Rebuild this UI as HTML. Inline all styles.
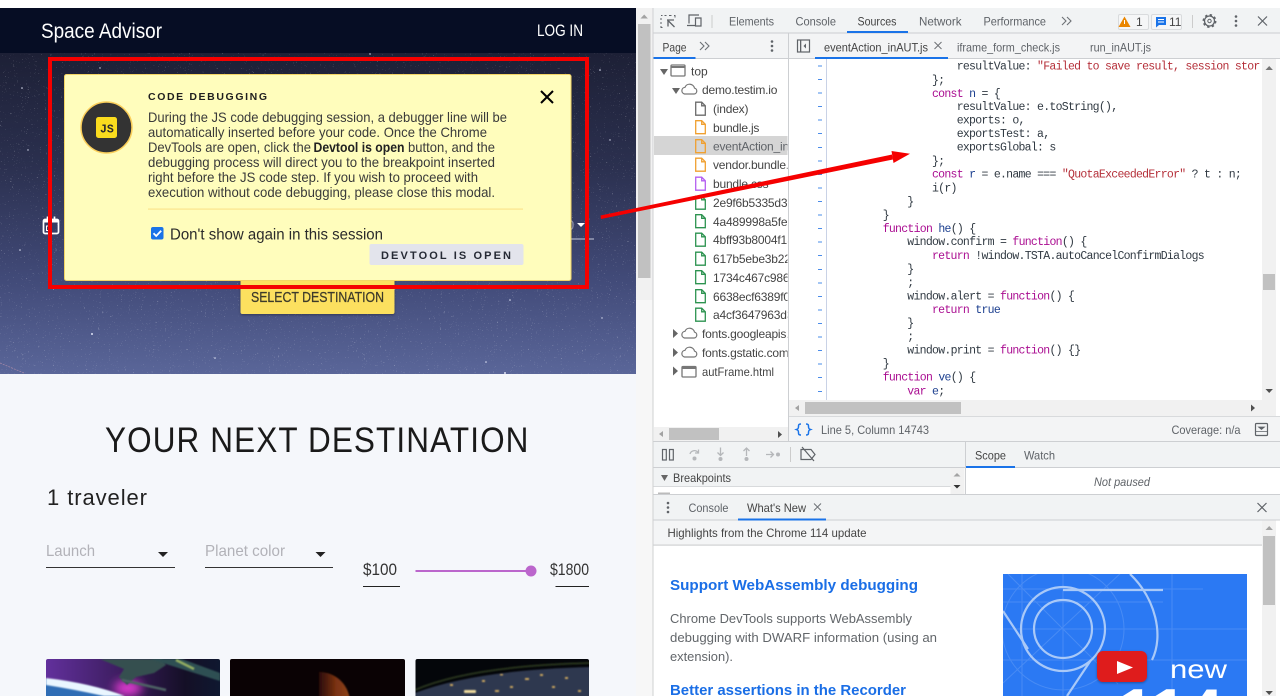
<!DOCTYPE html>
<html lang="en"><head><meta charset="utf-8"><title>Space Advisor</title>
<style>
html,body{margin:0;padding:0;width:1280px;height:696px;overflow:hidden;background:#fff}
#w{position:relative;width:1280px;height:696px;overflow:hidden}
svg{display:block;filter:blur(.3px)}
text{font-family:"Liberation Sans",sans-serif;white-space:pre}
.d{font-size:12px;fill:#5f6368}
.t{font-size:12px;fill:#444}
.n{letter-spacing:-.2px}
.m{font-size:14px;fill:#3a3a3a}
.c{font-family:"Liberation Mono",monospace;font-size:11.500px;letter-spacing:-.72px;fill:#303942}
.k{fill:#aa0d91}.s{fill:#b5303a}.v{fill:#1c3f8f}
</style></head><body><div id="w">
<svg width="1280" height="696" viewBox="0 0 1280 696" xmlns="http://www.w3.org/2000/svg">
<defs>
<linearGradient id="hero" x1="0" y1="0" x2="0" y2="1"><stop offset="0" stop-color="#1d2036"/><stop offset=".35" stop-color="#2b304f"/><stop offset=".7" stop-color="#414a78"/><stop offset="1" stop-color="#5a6699"/></linearGradient>
<linearGradient id="mars" x1="0" y1="0" x2="1" y2="0"><stop offset="0" stop-color="#2a0a06"/><stop offset=".55" stop-color="#7a3212"/><stop offset="1" stop-color="#8e4418"/></linearGradient>
<linearGradient id="pur" x1="0" y1="0" x2="1" y2="0"><stop offset="0" stop-color="#62309c"/><stop offset=".45" stop-color="#3a1c5c"/><stop offset=".8" stop-color="#140f26"/><stop offset="1" stop-color="#0f1830"/></linearGradient>
<filter id="stars" x="0" y="0" width="100%" height="100%"><feTurbulence type="fractalNoise" baseFrequency=".75" numOctaves="2" seed="7"/><feColorMatrix values="0 0 0 0 1  0 0 0 0 1  0 0 0 0 1  5 5 0 0 -6.500"/></filter>
<filter id="b1" x="-30%" y="-30%" width="160%" height="160%"><feGaussianBlur stdDeviation=".8"/></filter>
<filter id="b3" x="-80%" y="-80%" width="260%" height="260%"><feGaussianBlur stdDeviation="5"/></filter>
<filter id="sh" x="-10%" y="-20%" width="120%" height="150%"><feDropShadow dx="0" dy="1" stdDeviation="1.200" flood-color="#000" flood-opacity=".35"/></filter>
<clipPath id="side"><rect x="654" y="60" width="133.500" height="340"/></clipPath>
<clipPath id="c1"><path d="M46 661a2 2 0 0 1 2-2h170a2 2 0 0 1 2 2v35H46z"/></clipPath>
<clipPath id="c2"><path d="M230 661a2 2 0 0 1 2-2h171a2 2 0 0 1 2 2v35H230z"/></clipPath>
<clipPath id="c3"><path d="M415.500 661a2 2 0 0 1 2-2h169.500a2 2 0 0 1 2 2v35H415.500z"/></clipPath>
<clipPath id="art"><rect x="1003" y="574" width="244" height="122"/></clipPath>
<path id="f" d="M.7.7h6l3.600 3.600v9.400H.7zM6.700.7v3.600h3.600" fill="none" stroke-width="1.300"/>
<path id="cloud" d="M3.500 11h9.500a3 3 0 0 0 .5-5.900A5 5 0 0 0 4 4.300 3.400 3.400 0 0 0 3.500 11z" fill="none" stroke="#777" stroke-width="1.200"/>
</defs>

<!-- PAGE -->
<rect width="1280" height="696" fill="#fff"/>
<rect x="0" y="374" width="636" height="322" fill="#f5f7fb"/>
<rect x="0" y="53" width="636" height="321" fill="url(#hero)"/>
<rect x="0" y="53" width="636" height="321" filter="url(#stars)" opacity=".4"/>
<path d="M0 363L24 373" stroke="#a88aa8" stroke-width=".7" stroke-dasharray="2 1"/>
<g fill="#dfe3f5"><circle cx="22" cy="88" r=".8"/><circle cx="100" cy="68" r=".7"/><circle cx="370" cy="54" r=".7"/><circle cx="600" cy="70" r=".8"/><circle cx="28" cy="150" r=".7"/><circle cx="610" cy="140" r=".7"/><circle cx="20" cy="250" r=".8"/><circle cx="92" cy="334" r="1"/><circle cx="215" cy="358" r=".8"/><circle cx="486" cy="362" r=".8"/><circle cx="510" cy="300" r=".8"/><circle cx="602" cy="318" r=".7"/><circle cx="505" cy="373" r="1"/></g>
<rect x="0" y="8" width="636" height="45" fill="#060d24"/>
<text x="41" y="38" font-size="21" fill="#fff" textLength="121" lengthAdjust="spacingAndGlyphs">Space Advisor</text>
<text x="537" y="36" font-size="17" fill="#fff" textLength="46" lengthAdjust="spacingAndGlyphs">LOG IN</text>

<!-- under-modal fragments -->
<rect x="43.500" y="219.500" width="15" height="14" rx="1.500" fill="none" stroke="#fff" stroke-width="1.700"/>
<rect x="43.500" y="219" width="15" height="3.500" fill="#fff"/>
<path d="M47.500 216.500v4M54.500 216.500v4" stroke="#fff" stroke-width="1.700"/>
<rect x="46.500" y="226" width="4" height="4.500" fill="none" stroke="#fff" stroke-width="1"/>
<text x="566" y="230" font-size="15" fill="#fff" opacity=".4">0</text>
<path d="M577 223h8l-4 4z" fill="#fff"/>
<rect x="571" y="238.500" width="23" height="1" fill="#c8cbdc"/>

<rect x="240.500" y="270" width="154" height="44" rx="2" fill="#fce05e" filter="url(#sh)"/>
<text x="251" y="302" font-size="14.500" fill="#3d3a2a" stroke="#3d3a2a" stroke-width=".25" textLength="133" lengthAdjust="spacingAndGlyphs">SELECT DESTINATION</text>

<!-- Modal -->
<rect x="64.500" y="74.500" width="506.500" height="206" rx="2" fill="#fffdbc" stroke="#f3d565"/>
<circle cx="106.500" cy="127.500" r="25.500" fill="#333" stroke="#fbcf5a" stroke-width="1.500"/>
<rect x="96" y="117" width="21" height="21" rx="2.500" fill="#fadc1e"/>
<text x="100" y="132.500" font-size="11.500" font-weight="bold" fill="#2b2b2b" style="font-family:'Liberation Mono',monospace">JS</text>
<text x="148" y="100" font-size="10.500" font-weight="bold" fill="#1f1f1f" textLength="119">CODE DEBUGGING</text>
<text class="m" x="148" y="122" textLength="359" lengthAdjust="spacingAndGlyphs">During the JS code debugging session, a debugger line will be</text>
<text class="m" x="148" y="137" textLength="339" lengthAdjust="spacingAndGlyphs">automatically inserted before your code. Once the Chrome</text>
<text class="m" x="148" y="152" textLength="163" lengthAdjust="spacingAndGlyphs">DevTools are open, click the</text>
<text class="m" x="313.500" y="152" style="font-weight:bold;fill:#222" textLength="91" lengthAdjust="spacingAndGlyphs">Devtool is open</text>
<text class="m" x="408" y="152" textLength="87" lengthAdjust="spacingAndGlyphs">button, and the</text>
<text class="m" x="148" y="167" textLength="347" lengthAdjust="spacingAndGlyphs">debugging process will direct you to the breakpoint inserted</text>
<text class="m" x="148" y="182" textLength="330" lengthAdjust="spacingAndGlyphs">right before the JS code step. If you wish to proceed with</text>
<text class="m" x="148" y="197" textLength="347" lengthAdjust="spacingAndGlyphs">execution without code debugging, please close this modal.</text>
<rect x="148" y="208.500" width="375" height="1.200" fill="#fbe48d"/>
<rect x="151" y="227" width="12.500" height="12.500" rx="2" fill="#1a73e8"/>
<path d="M153.500 233.300l2.700 2.700 5-5.300" fill="none" stroke="#fff" stroke-width="1.800"/>
<text x="170" y="239.500" font-size="15.500" fill="#2b2b2b" textLength="213" lengthAdjust="spacingAndGlyphs">Don't show again in this session</text>
<rect x="369.500" y="244" width="154" height="21" rx="2" fill="#e3e4ec"/>
<text x="381" y="259" font-size="11" font-weight="bold" fill="#262a35" textLength="130">DEVTOOL IS OPEN</text>
<path d="M541 91l12 12M553 91l-12 12" stroke="#000" stroke-width="2" fill="none"/>

<rect x="50" y="59" width="537" height="228" fill="none" stroke="#f50000" stroke-width="4"/>

<!-- Lower page -->
<text transform="translate(105 452) scale(.9 1)" x="0" y="0" font-size="35" fill="#1a1a1a" textLength="470.500">YOUR NEXT DESTINATION</text>
<text x="47" y="505" font-size="22" fill="#222" textLength="100">1 traveler</text>
<text x="46" y="556" font-size="16" fill="#b2b2b8" textLength="49" lengthAdjust="spacingAndGlyphs">Launch</text>
<rect x="46" y="567" width="129" height="1" fill="#333"/>
<path d="M158 552h10l-5 5z" fill="#222"/>
<text x="205" y="556" font-size="16" fill="#b2b2b8" textLength="80" lengthAdjust="spacingAndGlyphs">Planet color</text>
<rect x="205" y="567" width="128" height="1" fill="#333"/>
<path d="M315.500 552h10l-5 5z" fill="#222"/>
<text x="363" y="575" font-size="17" fill="#333" textLength="34" lengthAdjust="spacingAndGlyphs">$100</text>
<rect x="363" y="586" width="37" height="1" fill="#222"/>
<rect x="415.500" y="570" width="115" height="2" fill="#bb66cc"/>
<circle cx="531" cy="571" r="5.500" fill="#bb66cc"/>
<text x="550" y="575" font-size="17" fill="#333" textLength="39" lengthAdjust="spacingAndGlyphs">$1800</text>
<rect x="555.500" y="586" width="33.500" height="1" fill="#222"/>

<!-- cards -->
<g clip-path="url(#c1)">
<rect x="46" y="659" width="174" height="37" fill="url(#pur)"/>
<ellipse cx="128" cy="688" rx="14" ry="8" fill="#e03ad0" filter="url(#b3)"/>
<path d="M46 679Q90 684 122 696H46z" fill="#2f6db5"/>
<path d="M46 678Q90 683 125 696L104 696Q72 689 46 685z" fill="#eaf6ff" filter="url(#b1)"/>
<path d="M100 659h62l4 6-12 8-18 4-9 8-8-8 5-8z" fill="#34504f" filter="url(#b1)"/>
<path d="M150 659l70 22v-8l-38-14z" fill="#2f4f52" filter="url(#b1)"/>
<path d="M176 660l18 9" stroke="#94ad62" stroke-width="2.500" filter="url(#b1)"/>
<path d="M122 680l44 10" stroke="#4d6264" stroke-width="2.500" filter="url(#b1)"/>
</g>
<g clip-path="url(#c2)">
<rect x="230" y="659" width="175" height="37" fill="#0a0204"/>
<path d="M319 672a30.750 30.750 0 0 1 31 31h-31z" fill="url(#mars)" filter="url(#b1)"/>
</g>
<g clip-path="url(#c3)">
<rect x="415.500" y="659" width="174" height="37" fill="#04060a"/>
<path d="M415 693Q475 670 590 667v30h-175z" fill="#2f3950" filter="url(#b1)"/>
<path d="M415 690Q470 666 590 663" fill="none" stroke="#26331f" stroke-width="2" filter="url(#b1)"/>
<g fill="#c9a45e" filter="url(#b1)"><rect x="464" y="690" width="12" height="3" rx="1" fill="#f0dc9e"/><rect x="450" y="684" width="3" height="2"/><rect x="482" y="680" width="3" height="2"/><rect x="500" y="674" width="3" height="1.500"/><rect x="510" y="686" width="3" height="2"/><rect x="525" y="678" width="4" height="2"/><rect x="540" y="674" width="3" height="2"/><rect x="552" y="686" width="3" height="2"/><rect x="565" y="677" width="3" height="2"/><rect x="578" y="690" width="3" height="2"/><rect x="495" y="690" width="4" height="2"/></g>
</g>

<!-- page scrollbar -->
<rect x="636" y="8" width="17" height="292" fill="#f1f1f1"/>
<rect x="636" y="300" width="17" height="396" fill="#f7f7f7"/>
<path d="M640.500 18.500l3.700-4 3.700 4z" fill="#a3a3a3"/>
<rect x="638" y="24" width="12.500" height="254" fill="#c1c1c1"/>

<!-- DEVTOOLS -->
<rect x="653" y="8" width="627" height="688" fill="#fff"/>
<rect x="652.500" y="8" width="1" height="688" fill="#cfd0d2"/>
<rect x="653.500" y="8" width="626.500" height="25" fill="#f1f3f4"/>
<rect x="653.500" y="32.500" width="626.500" height="1" fill="#cbcdd1"/>
<g fill="none" stroke="#5f6368">
<path d="M661 15.500h1.500M664.500 15.500h2M669 15.500h2.500M674 15.500h1v2M661 18v2M661 22v2M661 26v1.500h1.500" stroke-width="1"/>
<path d="M667 20l7 0M668 20.500v6M668.500 21l6 6" stroke-width="1.300"/>
<path d="M689 23.500V15h10M687 25.500h8M695.500 18h5.500v8h-5.500z" stroke-width="1.200"/>
</g>
<rect x="711.500" y="15" width="1" height="13" fill="#ccc"/>
<text class="d" x="729" y="25.500" textLength="45" lengthAdjust="spacingAndGlyphs">Elements</text>
<text class="d" x="795.500" y="25.500" textLength="40.500" lengthAdjust="spacingAndGlyphs">Console</text>
<text class="t" x="857.500" y="25.500" textLength="39" lengthAdjust="spacingAndGlyphs">Sources</text>
<text class="d" x="919" y="25.500" textLength="42.500" lengthAdjust="spacingAndGlyphs">Network</text>
<text class="d" x="983.500" y="25.500" textLength="62.500" lengthAdjust="spacingAndGlyphs">Performance</text>
<path d="M1062 17l4 4-4 4M1067 17l4 4-4 4" fill="none" stroke="#6e7276" stroke-width="1.100"/>
<rect x="847" y="31" width="61" height="2" fill="#1a73e8"/>
<rect x="1118.500" y="14.500" width="30" height="15" rx="1.500" fill="#f5f6f7" stroke="#d9dbdd"/>
<path d="M1124.500 16.500l6 10.500h-12z" fill="#ea8600"/><rect x="1124" y="20" width="1" height="4" fill="#fff"/>
<text class="t" x="1136" y="26">1</text>
<rect x="1151.500" y="14.500" width="30" height="15" rx="1.500" fill="#f5f6f7" stroke="#d9dbdd"/>
<path d="M1156 17h10v8h-7l-3 2.500z" fill="#1a73e8"/><path d="M1158 19.500h6M1158 22h6" stroke="#fff"/>
<text class="t" x="1169" y="26">11</text>
<rect x="1192" y="15" width="1" height="13" fill="#ccc"/>
<circle cx="1209.500" cy="21" r="5" fill="none" stroke="#5f6368" stroke-width="1.300"/>
<circle cx="1209.500" cy="21" r="6.200" fill="none" stroke="#5f6368" stroke-width="1.500" stroke-dasharray="2.400 2.470"/>
<circle cx="1209.500" cy="21" r="1.700" fill="none" stroke="#5f6368"/>
<g fill="#5f6368"><circle cx="1236" cy="16.500" r="1.300"/><circle cx="1236" cy="21" r="1.300"/><circle cx="1236" cy="25.500" r="1.300"/></g>
<path d="M1258 16.500l9 9M1267 16.500l-9 9" stroke="#5f6368" stroke-width="1.200"/>

<!-- second bar -->
<rect x="653.500" y="33.500" width="626.500" height="25" fill="#f3f4f5"/>
<rect x="653.500" y="58" width="626.500" height="1" fill="#cdcfd2"/>
<text class="t" x="662.500" y="51.500" textLength="24" lengthAdjust="spacingAndGlyphs">Page</text>
<path d="M700 42l4 4-4 4M705 42l4 4-4 4" fill="none" stroke="#6e7276" stroke-width="1.100"/>
<g fill="#5f6368"><circle cx="772" cy="41.500" r="1.300"/><circle cx="772" cy="46" r="1.300"/><circle cx="772" cy="50.500" r="1.300"/></g>
<rect x="653.500" y="57" width="42" height="2" fill="#1a73e8"/>
<rect x="788" y="33" width="1" height="409" fill="#cdcfd2"/>
<rect x="797.500" y="40" width="12" height="12" fill="none" stroke="#5f6368" stroke-width="1.200"/><rect x="800" y="40" width="1.300" height="12" fill="#5f6368"/><path d="M806 43.500v5l-2.500-2.500z" fill="#5f6368"/>
<text class="t" x="824" y="51.500" textLength="104" lengthAdjust="spacingAndGlyphs">eventAction_inAUT.js</text>
<path d="M934.500 42l7 7M941.500 42l-7 7" stroke="#6e7276" stroke-width="1"/>
<rect x="815" y="57" width="133" height="2" fill="#1a73e8"/>
<text class="d" x="957" y="51.500" textLength="103" lengthAdjust="spacingAndGlyphs">iframe_form_check.js</text>
<text class="d" x="1090" y="51.500" textLength="61" lengthAdjust="spacingAndGlyphs">run_inAUT.js</text>

<!-- sidebar -->
<rect x="654" y="136" width="133.500" height="19" fill="#d5d5d5"/>
<g clip-path="url(#side)">
<path d="M660 69h8l-4 6z M672 88h8l-4 6z" fill="#666"/>
<rect x="671" y="65" width="14" height="11" rx="1" fill="none" stroke="#777" stroke-width="1.300"/><rect x="671" y="66" width="14" height="2" fill="#777"/>
<text class="t" x="691" y="75.500">top</text>
<use href="#cloud" x="681" y="83"/>
<text class="t n" x="702" y="94">demo.testim.io</text>
<g stroke="#6c6c6c"><use href="#f" x="695" y="101.500"/></g>
<text class="t n" x="713" y="113">(index)</text>
<g stroke="#f0a030"><use href="#f" x="695" y="120"/><use href="#f" x="695" y="139"/><use href="#f" x="695" y="157.500"/></g>
<text class="t n" x="713" y="132">bundle.js</text>
<text class="d n" x="713" y="150.500">eventAction_inAUT.js</text>
<text class="t n" x="713" y="169">vendor.bundle.js</text>
<g stroke="#b45ff0"><use href="#f" x="695" y="176.500"/></g>
<text class="t n" x="713" y="188">bundle.css</text>
<g stroke="#2d9350"><use href="#f" x="695" y="195.500"/><use href="#f" x="695" y="214"/><use href="#f" x="695" y="232.500"/><use href="#f" x="695" y="251.500"/><use href="#f" x="695" y="270"/><use href="#f" x="695" y="289"/><use href="#f" x="695" y="307.500"/></g>
<text class="t n" x="713" y="207">2e9f6b5335d38a1f</text>
<text class="t n" x="713" y="226">4a489998a5fea3b1</text>
<text class="t n" x="713" y="244">4bff93b8004f1a2c</text>
<text class="t n" x="713" y="263">617b5ebe3b22c1d4</text>
<text class="t n" x="713" y="282">1734c467c9863e0a</text>
<text class="t n" x="713" y="301">6638ecf6389f04ab</text>
<text class="t n" x="713" y="319">a4cf3647963d3e21</text>
<path d="M673 329v9l5-4.500z M673 348v9l5-4.500z M673 366.500v9l5-4.500z" fill="#666"/>
<use href="#cloud" x="681" y="327"/><use href="#cloud" x="681" y="346"/>
<text class="t n" x="702" y="338">fonts.googleapis.com</text>
<text class="t n" x="702" y="357">fonts.gstatic.com</text>
<rect x="682" y="366.500" width="14" height="10.500" rx="1" fill="none" stroke="#777" stroke-width="1.300"/><rect x="682" y="367" width="14" height="2" fill="#777"/>
<text class="t" x="702" y="376" textLength="72" lengthAdjust="spacingAndGlyphs">autFrame.html</text>
</g>
<rect x="654" y="427" width="134" height="14" fill="#f1f1f1"/>
<rect x="669" y="428" width="50" height="12" fill="#c1c1c1"/>
<path d="M663 431v6l-4-3z" fill="#a3a3a3"/><path d="M778 431v7l4-3.500z" fill="#505050"/>

<!-- editor gutter -->
<rect x="826" y="59" width="1" height="341" fill="#c9d2e6"/>
<g fill="#4a8cea">
<rect x="818" y="65.500" width="4" height="1"/><rect x="818" y="79" width="4" height="1"/><rect x="818" y="92.500" width="4" height="1"/><rect x="818" y="106" width="4" height="1"/><rect x="818" y="119.500" width="4" height="1"/><rect x="818" y="133" width="4" height="1"/><rect x="818" y="147" width="4" height="1"/><rect x="818" y="160.500" width="4" height="1"/><rect x="818" y="174" width="4" height="1"/><rect x="818" y="187.500" width="4" height="1"/><rect x="818" y="201" width="4" height="1"/><rect x="818" y="214.500" width="4" height="1"/><rect x="818" y="228" width="4" height="1"/><rect x="818" y="241.500" width="4" height="1"/><rect x="818" y="255" width="4" height="1"/><rect x="818" y="269" width="4" height="1"/><rect x="818" y="282.500" width="4" height="1"/><rect x="818" y="296" width="4" height="1"/><rect x="818" y="309.500" width="4" height="1"/><rect x="818" y="323" width="4" height="1"/><rect x="818" y="336.500" width="4" height="1"/><rect x="818" y="350" width="4" height="1"/><rect x="818" y="363.500" width="4" height="1"/><rect x="818" y="377" width="4" height="1"/><rect x="818" y="391" width="4" height="1"/>
</g>
<!-- code -->
<text class="c" x="956.700" y="69.500">resultValue: <tspan class="s">"Failed to save result, session stor</tspan></text>
<text class="c" x="932" y="83.500">};</text>
<text class="c" x="932" y="97"><tspan class="k">const</tspan> <tspan class="v">n</tspan> = {</text>
<text class="c" x="956.700" y="110">resultValue: e.toString(),</text>
<text class="c" x="956.700" y="123.500">exports: o,</text>
<text class="c" x="956.700" y="137">exportsTest: a,</text>
<text class="c" x="956.700" y="150.500">exportsGlobal: s</text>
<text class="c" x="932" y="164.500">};</text>
<text class="c" x="932" y="177.500"><tspan class="k">const</tspan> <tspan class="v">r</tspan> = e.name === <tspan class="s">"QuotaExceededError"</tspan> ? t : n;</text>
<text class="c" x="932" y="191.500">i(r)</text>
<text class="c" x="907.300" y="205">}</text>
<text class="c" x="882.700" y="218.500">}</text>
<text class="c" x="882.700" y="232"><tspan class="k">function</tspan> <tspan class="v">he</tspan>() {</text>
<text class="c" x="907.300" y="245">window.confirm = <tspan class="k">function</tspan>() {</text>
<text class="c" x="932" y="259"><tspan class="k">return</tspan> !window.TSTA.autoCancelConfirmDialogs</text>
<text class="c" x="907.300" y="272.500">}</text>
<text class="c" x="907.300" y="286">;</text>
<text class="c" x="907.300" y="299.500">window.alert = <tspan class="k">function</tspan>() {</text>
<text class="c" x="932" y="313"><tspan class="k">return</tspan> <tspan class="v">true</tspan></text>
<text class="c" x="907.300" y="326.500">}</text>
<text class="c" x="907.300" y="340">;</text>
<text class="c" x="907.300" y="353.500">window.print = <tspan class="k">function</tspan>() {}</text>
<text class="c" x="882.700" y="367">}</text>
<text class="c" x="882.700" y="380.500"><tspan class="k">function</tspan> <tspan class="v">ve</tspan>() {</text>
<text class="c" x="907.300" y="394.500"><tspan class="k">var</tspan> <tspan class="v">e</tspan>;</text>
<!-- editor scrollbars -->
<rect x="1262" y="59" width="18" height="358" fill="#f1f1f1"/>
<rect x="1276" y="59" width="4" height="358" fill="#fff"/>
<path d="M1265.500 70l3.700-4 3.700 4z" fill="#777"/>
<rect x="1263" y="274" width="12" height="16" fill="#c1c1c1"/>
<path d="M1265.500 389h7.400l-3.700 4z" fill="#505050"/>
<rect x="789" y="400" width="473" height="16" fill="#f1f1f1"/>
<rect x="805" y="402" width="156" height="12" fill="#c1c1c1"/>
<path d="M799 405v6l-4-3z" fill="#a3a3a3"/><path d="M1251 404.500v7l4-3.500z" fill="#505050"/>
<!-- arrow over devtools -->
<path d="M600.500 215.500L892 154.500l1 5L601 219z" fill="#f50000"/>
<polygon points="910,153.700 891.500,151 893.500,163" fill="#f50000"/>

<!-- status bar -->
<rect x="789" y="416" width="491" height="26" fill="#f3f4f5"/>
<rect x="789" y="416" width="491" height="1" fill="#d8dadc"/>
<rect x="653.500" y="441" width="626.500" height="1.200" fill="#cdcfd2"/>
<path d="M801 424c-2.500 0-2.500 1-2.500 2.500 0 2-.5 2.500-2 3 1.500.5 2 1 2 3 0 1.500 0 2.500 2.500 2.500M806 424c2.500 0 2.500 1 2.500 2.500 0 2 .5 2.500 2 3-1.500.5-2 1-2 3 0 1.500 0 2.500-2.500 2.500" fill="none" stroke="#1a73e8" stroke-width="1.500"/>
<text class="d" x="821" y="434" textLength="108" lengthAdjust="spacingAndGlyphs">Line 5, Column 14743</text>
<text class="d" x="1171.500" y="434" textLength="69" lengthAdjust="spacingAndGlyphs">Coverage: n/a</text>
<rect x="1255.500" y="423.500" width="12" height="12" rx="1" fill="none" stroke="#5f6368" stroke-width="1.200"/><path d="M1255.500 431.500h12M1258.500 427h6l-3 2.500z" stroke="#5f6368" fill="#5f6368" stroke-width=".8"/>

<!-- debug toolbar -->
<rect x="653.500" y="442" width="626.500" height="25" fill="#f1f3f4"/>
<rect x="653.500" y="467" width="626.500" height="1" fill="#cdcfd2"/>
<g fill="none" stroke="#5f6368" stroke-width="1.200"><rect x="662.500" y="449.500" width="3.800" height="10.500"/><rect x="669.500" y="449.500" width="3.800" height="10.500"/></g>
<g fill="none" stroke="#b5b7ba" stroke-width="1.300">
<path d="M690 454a4.500 4.500 0 0 1 8-1.500M698.500 449.500v3.500H695"/>
<path d="M720.500 447.500v8M717.500 452.500l3 3 3-3"/>
<path d="M746.500 456v-8M743.500 451l3-3 3 3"/>
<path d="M766 454.500h7M770.500 451.500l3 3-3 3"/>
</g>
<g fill="#b5b7ba"><circle cx="694.500" cy="458.500" r="2"/><circle cx="720.500" cy="459" r="2"/><circle cx="746.500" cy="459" r="2"/><circle cx="778" cy="454.500" r="2"/></g>
<rect x="790" y="447" width="1" height="15" fill="#ccc"/>
<path d="M801 449.500h10l4 5-4 5h-10zM802 447l12 14" fill="none" stroke="#5f6368" stroke-width="1.200"/>
<rect x="965" y="442" width="1" height="52" fill="#cdcfd2"/>
<rect x="966" y="442" width="314" height="25" fill="#f1f3f4"/>
<text class="t" x="975" y="459.500" textLength="31" lengthAdjust="spacingAndGlyphs">Scope</text>
<text class="d" x="1024" y="459.500" textLength="31" lengthAdjust="spacingAndGlyphs">Watch</text>
<rect x="966" y="466" width="49" height="2" fill="#1a73e8"/>
<rect x="966" y="468" width="314" height="26" fill="#fff"/>
<text x="1094" y="486" font-size="12" font-style="italic" fill="#5f6368" textLength="56" lengthAdjust="spacingAndGlyphs">Not paused</text>
<rect x="653.500" y="468" width="297" height="18" fill="#f1f3f4"/>
<rect x="653.500" y="486" width="297" height="1" fill="#d8dadc"/>
<path d="M661 475h7l-3.500 6z" fill="#666"/>
<text class="t" x="673" y="482" textLength="58" lengthAdjust="spacingAndGlyphs">Breakpoints</text>
<rect x="658" y="492.500" width="12" height="2" fill="#bbb"/>
<rect x="950.500" y="468" width="14" height="26" fill="#f1f1f1"/>
<path d="M953.500 476.500l3.500-3.500 3.500 3.500z" fill="#a3a3a3"/><path d="M953.500 485h7l-3.500 3.500z" fill="#333"/>

<!-- drawer -->
<rect x="653.500" y="494" width="626.500" height="26" fill="#f1f3f4"/>
<rect x="653.500" y="494" width="626.500" height="1" fill="#cdcfd2"/>
<rect x="653.500" y="519.500" width="626.500" height="1" fill="#cdcfd2"/>
<g fill="#5f6368"><circle cx="668" cy="503" r="1.300"/><circle cx="668" cy="507.500" r="1.300"/><circle cx="668" cy="512" r="1.300"/></g>
<text class="d" x="688.500" y="512" textLength="40" lengthAdjust="spacingAndGlyphs">Console</text>
<text class="t" x="747" y="512" textLength="59" lengthAdjust="spacingAndGlyphs">What's New</text>
<path d="M814 503.500l7 7M821 503.500l-7 7" stroke="#6e7276" stroke-width="1"/>
<rect x="738" y="518.500" width="88" height="2" fill="#1a73e8"/>
<path d="M1257.500 503l9 9M1266.500 503l-9 9" stroke="#5f6368" stroke-width="1.200"/>
<rect x="653.500" y="520.500" width="626.500" height="24.500" fill="#f4f5f6"/>
<rect x="653.500" y="544.500" width="608.500" height="1.200" fill="#cfd1d3"/>
<text class="t" x="667.500" y="537" textLength="199" lengthAdjust="spacingAndGlyphs">Highlights from the Chrome 114 update</text>

<!-- article -->
<text x="670" y="590" font-size="15" font-weight="bold" fill="#1a6ee6" textLength="248" lengthAdjust="spacingAndGlyphs">Support WebAssembly debugging</text>
<text x="670" y="623" font-size="13" fill="#62666a" textLength="242" lengthAdjust="spacingAndGlyphs">Chrome DevTools supports WebAssembly</text>
<text x="670" y="642" font-size="13" fill="#62666a" textLength="267" lengthAdjust="spacingAndGlyphs">debugging with DWARF information (using an</text>
<text x="670" y="661" font-size="13" fill="#62666a" textLength="63" lengthAdjust="spacingAndGlyphs">extension).</text>
<text x="670" y="695" font-size="15" font-weight="bold" fill="#1a6ee6" textLength="236" lengthAdjust="spacingAndGlyphs">Better assertions in the Recorder</text>

<g clip-path="url(#art)">
<rect x="1003" y="574" width="244" height="122" fill="#2b79f3"/>
<g stroke="#5c98f5" stroke-width="1" fill="none" opacity=".6">
<path d="M1003 589h200M1003 602h160M1003 629h244M1003 660h244M1022 574v122M1063 574v122M1172 574v122M1008 574l110 110M1003 683l120-112"/>
<circle cx="1063" cy="629" r="61"/>
</g>
<g fill="none" stroke="#a9c9f8" stroke-width="2.200">
<circle cx="1063" cy="629" r="29"/>
<circle cx="1063" cy="629" r="42"/>
<path d="M1063 590h100M1130 574c26 25 34 62 22 86M1003 611l25 38M1091 660l-24 36"/>
</g>
<rect x="1097" y="651" width="50" height="31" rx="6" fill="#df1a1e" filter="url(#sh)"/>
<path d="M1117 661l16 6.500-16 6.500z" fill="#fff"/>
<text x="1170" y="678" font-size="26" fill="#fff" textLength="57" lengthAdjust="spacingAndGlyphs">new</text>
<text x="1118" y="732" font-size="62" font-weight="bold" fill="#fff" textLength="105" lengthAdjust="spacingAndGlyphs">114</text>
</g>
<rect x="1262" y="520.500" width="14" height="175.500" fill="#f1f1f1"/>
<rect x="1276" y="520.500" width="4" height="175.500" fill="#fff"/>
<path d="M1265.500 530l3.700-4 3.700 4z" fill="#a3a3a3"/>
<rect x="1263" y="536" width="12" height="69" fill="#c1c1c1"/>
<path d="M1265.500 691h7.400l-3.700 4z" fill="#505050"/>
</svg>
</div></body></html>
